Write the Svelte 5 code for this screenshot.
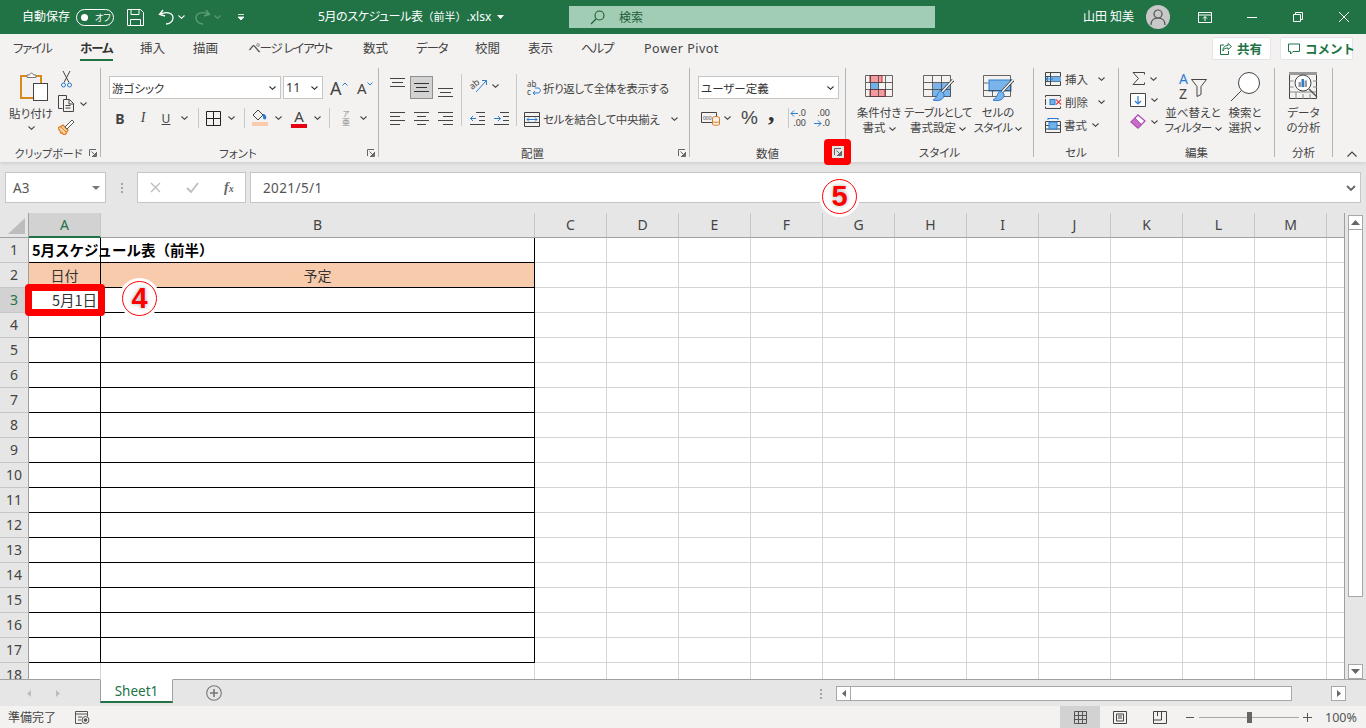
<script>
  const tabs = [
    { label: "ファイル", cls: "kana" },
    { label: "ホーム", cls: "kana" },
    { label: "挿入", cls: "" },
    { label: "描画", cls: "" },
    { label: "ページ レイアウト", cls: "kana" },
    { label: "数式", cls: "" },
    { label: "データ", cls: "kana" },
    { label: "校閲", cls: "" },
    { label: "表示", cls: "" },
    { label: "ヘルプ", cls: "kana" },
    { label: "Power Pivot", cls: "latin" }
  ];
  const columns = ["A", "B", "C", "D", "E", "F", "G", "H", "I", "J", "K", "L", "M", ""];
  const rows = Array.from({ length: 18 }, (_, i) => i + 1);

  function cellClass(row, idx) {
    const names = ["cell"];
    if (idx < 2 && row <= 17) names.push("boxed");
    if (idx < 2 && row === 2) names.push("head");
    return names.join(" ");
  }
</script>

{#snippet chev(cls = "")}
  <svg class="chev {cls}" width="7" height="4" viewBox="0 0 7 4"><path d="M.5.5 3.5 3.3 6.5.5" fill="none" stroke="currentColor" stroke-width="1.1" /></svg>
{/snippet}

{#snippet launcher()}
  <svg class="launcher" width="8" height="8" viewBox="0 0 8 8"><path d="M.5 7V.5H7M7.5 3v4.500H3M2.500 2.500l4 4M4 6.500h2.500V4" fill="none" stroke="#666" stroke-width="1" /></svg>
{/snippet}

<div class="app">
  <header class="titlebar">
    <span class="autosave">自動保存</span>
    <span class="toggle"><i></i><b>オフ</b></span>
    <svg class="qa save" width="17" height="17" viewBox="0 0 17 17"><path d="M.5.5h13l3 3v13H.5zM4 .5v5h8v-5M3.500 16.500v-6h10v6" fill="none" stroke="#fff" /></svg>
    <svg class="qa undo" width="17" height="16" viewBox="0 0 17 16"><path d="M5 1 1.500 5.500 7 7M2 5.500c5-3 13-2.500 13 3.500 0 4-4 6-7 6" fill="none" stroke="#fff" stroke-width="1.300" /></svg>
    <span class="qa-chev">{@render chev()}</span>
    <svg class="qa redo" width="17" height="16" viewBox="0 0 17 16"><path d="M12 1l3.500 4.500L10 7M15 5.500c-5-3-13-2.500-13 3.500 0 4 4 6 7 6" fill="none" stroke="#5f9c7a" stroke-width="1.300" /></svg>
    <span class="qa-chev dim">{@render chev()}</span>
    <svg class="qa custom" width="8" height="7" viewBox="0 0 8 7"><path d="M1 .5h6M1 3 4 6 7 3z" fill="#fff" stroke="#fff" stroke-width=".8" /></svg>
    <span class="doc"><span class="doc-kana">5月のスケジュール表</span><span class="doc-paren">（前半）</span>.xlsx</span>
    <svg class="doc-caret" width="7" height="4" viewBox="0 0 7 4"><path d="M0 0h7L3.500 4z" fill="#fff" /></svg>
    <div class="search">
      <svg width="15" height="15" viewBox="0 0 15 15"><circle cx="9.500" cy="5.500" r="4.500" fill="none" stroke="#1c5a38" stroke-width="1.100" /><path d="M6 9 1 14" stroke="#1c5a38" stroke-width="1.100" /></svg>
      <span>検索</span>
    </div>
    <span class="user">山田 知美</span>
    <span class="avatar">
      <svg width="16" height="16" viewBox="0 0 16 16"><circle cx="8" cy="5" r="4" fill="none" stroke="#555" stroke-width="1.200" /><path d="M1 16c0-5 3-7 7-7s7 2 7 7" fill="none" stroke="#555" stroke-width="1.200" /></svg>
    </span>
    <svg class="win" width="14" height="11" viewBox="0 0 14 11"><path d="M.5.500h13v10H.5zM.5 3h13M7 9V4.500M5 6.500 7 4.500l2 2" fill="none" stroke="#fff" /></svg>
    <svg class="win minw" width="10" height="1" viewBox="0 0 10 1"><path d="M0 .5h10" stroke="#fff" /></svg>
    <svg class="win resw" width="10" height="10" viewBox="0 0 10 10"><path d="M.5 2.500h7v7h-7zM2.500 2.500v-2h7v7h-2" fill="none" stroke="#fff" /></svg>
    <svg class="win closew" width="10" height="10" viewBox="0 0 10 10"><path d="M0 0l10 10M10 0 0 10" stroke="#fff" /></svg>
  </header>

  <nav class="tabs">
    {#each tabs as tab}
      <span class="tab-slot"><span class="tab {tab.cls}" class:active={tab.label === "ホーム"}>{tab.label}</span></span>
    {/each}
    <button class="pill share">
      <svg width="12" height="12" viewBox="0 0 12 12"><path d="M8 .5l3.500 3L8 6.500V5C5 5 3.500 6 3 8c-.5-3 1.500-5.500 5-5.500zM4 2H.5v9.500h8V8" fill="none" stroke="#217346" /></svg>
      共有
    </button>
    <button class="pill comment">
      <svg width="12" height="12" viewBox="0 0 12 12"><path d="M.5 1h11v7.500H5L2.500 11V8.500h-2z" fill="none" stroke="#217346" /></svg>
      コメント
    </button>
  </nav>

  <section class="ribbon">
    <div class="group clip">
      <div class="body">
        <div class="paste">
          <svg class="paste-icon" width="28" height="29" viewBox="0 0 28 29"><rect x="1" y="4" width="20" height="22" fill="#f3f2f1" stroke="#d98a1f" stroke-width="2" /><path d="M7 5V3h2.500c.5-2.500 3.500-2.500 4 0H16v2.500H7z" fill="#fff" stroke="#777" /><rect x="13.500" y="11.500" width="14" height="17" fill="#fff" stroke="#444" /></svg>
          <span class="lbl">貼り付け</span>
          {@render chev("under")}
        </div>
        <div class="clip-col">
          <svg class="cut" width="11" height="17" viewBox="0 0 11 17"><path d="M2 0l6 11.500M9 0 3 11.500" stroke="#444" /><circle cx="2.500" cy="14" r="2" fill="none" stroke="#2b7cd3" /><circle cx="8.500" cy="14" r="2" fill="none" stroke="#2b7cd3" /></svg>
          <span class="with-chev">
            <svg width="17" height="17" viewBox="0 0 17 17"><path d="M4.500 13.500H.5V.5h8V4M5.500 4.500h6l4 4v8h-10zM11 4.500V9h4.500M7.500 10.500h5M7.500 13h5" fill="none" stroke="#444" /></svg>
            {@render chev()}
          </span>
          <svg class="brush" width="16" height="16" viewBox="0 0 16 16"><path d="M0 9l5-3 5 5-3 5-2-1-1-1-1 0-1-2z" fill="#f8cfa0" stroke="#e07b1a" stroke-width="1.300" /><path d="M3 8l5 5" stroke="#e07b1a" /><path d="M7 8l7-7 2 2-7 7z" fill="#fff" stroke="#555" /></svg>
        </div>
      </div>
      <div class="caption"><span></span><span>クリップボード</span>{@render launcher()}</div>
    </div>

    <div class="group font">
      <div class="body">
        <div class="font-row top">
          <span class="select name"><span class="sel-txt">游ゴシック</span>{@render chev()}</span>
          <span class="select size"><span class="sel-txt">11</span>{@render chev()}</span>
          <span class="grow">A<svg width="6" height="4" viewBox="0 0 6 4"><path d="M.5 3.500 3 1l2.500 2.500" fill="none" stroke="#2b7cd3" /></svg></span>
          <span class="shrink">A<svg width="6" height="4" viewBox="0 0 6 4"><path d="M.5.500 3 3 5.500.5" fill="none" stroke="#2b7cd3" /></svg></span>
        </div>
        <div class="font-row bottom">
          <b class="fmt bold">B</b>
          <i class="fmt ital">I</i>
          <u class="fmt under">U</u>
          {@render chev()}
          <span class="vsep s1"></span>
          <svg width="15" height="15" viewBox="0 0 15 15"><path d="M.5.500h14v14H.5zM7.500.500v14M.5 7.500h14" fill="none" stroke="#222" /></svg>
          {@render chev()}
          <span class="vsep s2"></span>
          <span class="swatch">
            <svg width="16" height="11" viewBox="0 0 16 11"><path d="M1 5l5-5 5 5-5 5z" fill="none" stroke="#444" /><path d="M11 4c2 0 4 2 3 5-1 1-3 0-3-1z" fill="#2b7cd3" /></svg>
            <i class="bar peach"></i>
          </span>
          {@render chev()}
          <span class="swatch text-color">
            <span class="letter">A</span>
            <i class="bar red"></i>
          </span>
          {@render chev()}
          <span class="vsep s3"></span>
          <span class="phonetic"><small>ア</small><span>亜</span></span>
          {@render chev()}
        </div>
      </div>
      <div class="caption"><span></span><span>フォント</span>{@render launcher()}</div>
    </div>

    <div class="group align">
      <div class="body">
        <div class="align-left">
          <div class="align-row">
            <svg class="l-top" width="15" height="9" viewBox="0 0 15 9"><path d="M0 .5h15M2 4.500h11M0 8.500h15" stroke="#444" /></svg>
            <span class="on"><svg width="15" height="9" viewBox="0 0 15 9"><path d="M0 .5h15M2 4.500h11M0 8.500h15" stroke="#333" /></svg></span>
            <svg class="l-bot" width="15" height="9" viewBox="0 0 15 9"><path d="M0 .5h15M2 4.500h11M0 8.500h15" stroke="#444" /></svg>
          </div>
          <div class="align-row second">
            <svg width="15" height="13" viewBox="0 0 15 13"><path d="M0 .5h15M0 4.500h10M0 8.500h15M0 12.500h10" stroke="#444" /></svg>
            <svg width="15" height="13" viewBox="0 0 15 13"><path d="M0 .5h15M3 4.500h9M0 8.500h15M3 12.500h9" stroke="#444" /></svg>
            <svg width="15" height="13" viewBox="0 0 15 13"><path d="M0 .5h15M5 4.500h10M0 8.500h15M5 12.500h10" stroke="#444" /></svg>
          </div>
        </div>
        <span class="vsep tall"></span>
        <div class="align-mid">
          <span class="with-chev">
            <svg class="open" width="17" height="15" viewBox="0 0 17 15"><text x="0" y="10" class="svg-txt" transform="rotate(-40 4 8)">ab</text><path d="M6 14 16 3M12 2.500h4.500V7" fill="none" stroke="#2b7cd3" /></svg>
            {@render chev()}
          </span>
          <span class="indent">
            <svg width="15" height="13" viewBox="0 0 15 13"><path d="M6 .5h9M9 4.500h6M9 8.500h6M0 12.500h15" stroke="#444" /><path d="M0 6.500h6M3 4 .5 6.500 3 9" fill="none" stroke="#2b7cd3" /></svg>
            <svg width="15" height="13" viewBox="0 0 15 13"><path d="M6 .5h9M9 4.500h6M9 8.500h6M0 12.500h15" stroke="#444" /><path d="M0 6.500h6M4 4l2.500 2.500L4 9" fill="none" stroke="#2b7cd3" /></svg>
          </span>
        </div>
        <span class="vsep tall"></span>
        <div class="align-wrap">
          <span class="wrap-row first">
            <svg class="open" width="15" height="16" viewBox="0 0 15 16"><text x="0" y="6.500" class="svg-txt small">ab</text><text x="0" y="15" class="svg-txt small">c</text><path d="M6 13h5c3 0 3-5 0-5H8M8 11l-2 2 2 2" fill="none" stroke="#2b7cd3" /></svg>
            折り返して全体を表示する
          </span>
          <span class="wrap-row">
            <svg width="16" height="15" viewBox="0 0 16 15"><path d="M.5.500h15v14H.5zM.5 4.500h15M.5 10.500h15" fill="none" stroke="#444" /><path d="M3 7.500h10M5 5.500l-2 2 2 2M11 5.500l2 2-2 2" fill="none" stroke="#2b7cd3" /></svg>
            セルを結合して中央揃え
            {@render chev("wrap-chev")}
          </span>
        </div>
      </div>
      <div class="caption"><span></span><span>配置</span>{@render launcher()}</div>
    </div>

    <div class="group number">
      <div class="body">
        <span class="select fmt-name"><span class="sel-txt">ユーザー定義</span>{@render chev()}</span>
        <div class="number-row">
          <span class="with-chev tight">
            <svg class="open" width="20" height="16" viewBox="0 0 20 16"><path d="M.5 2.500h15v10H.5z" fill="none" stroke="#444" /><text x="2" y="9.500" class="svg-txt tiny">000</text><ellipse cx="15" cy="8" rx="3.500" ry="1.500" fill="#f3f2f1" stroke="#e07b1a" /><path d="M11.500 8v6.500c0 1 7 1 7 0V8M11.500 11.500c0 1 7 1 7 0" fill="#f3f2f1" stroke="#e07b1a" /></svg>
            {@render chev()}
          </span>
          <span class="pct">%</span>
          <span class="comma">,</span>
          <span class="vsep"></span>
          <span class="dec">
            <span class="dec-line"><svg width="8" height="7" viewBox="0 0 8 7"><path d="M8 3.500H1M4 .5l-3 3 3 3" fill="none" stroke="#2b7cd3" /></svg>.0</span>
            <span class="dec-line">.00</span>
          </span>
          <span class="dec second">
            <span class="dec-line">.00</span>
            <span class="dec-line"><svg width="8" height="7" viewBox="0 0 8 7"><path d="M0 3.500h7M4 .5l3 3-3 3" fill="none" stroke="#2b7cd3" /></svg>.0</span>
          </span>
        </div>
      </div>
      <div class="caption"><span></span><span>数値</span>{@render launcher()}</div>
    </div>

    <div class="group style">
      <div class="body big-row">
        <div class="big">
          <span class="big-icon low"><svg width="28" height="22" viewBox="0 0 28 22"><rect x="5" y=".5" width="12" height="7" fill="#f59ba0" stroke="#c8202a" /><rect x="5.500" y="7.500" width="8" height="7" fill="#6fb1e8" /><rect x="5" y="14.500" width="15" height="7" fill="#f59ba0" stroke="#c8202a" /><path d="M.5.500h27v21H.5zM.5 7.500h27M.5 14.500h27M5.500 .5v21M13.500 .5v21M20.500 .5v21" fill="none" stroke="#444" stroke-opacity=".8" /></svg></span>
          <span class="lbl">条件付き<br />書式 {@render chev()}</span>
        </div>
        <div class="big">
          <span class="big-icon low"><svg width="31" height="27" viewBox="0 0 31 27"><rect x="10" y="8" width="18" height="14" fill="#7ab4ea" /><path d="M.5.500h27v21H.5zM.5 7.500h27M.5 14.500h27M9.500 .5v21M18.500 .5v21" fill="none" stroke="#444" stroke-opacity=".8" /><path d="M30 5 18 18" stroke="#444" stroke-width="3" /><path d="M30 5 18 18" stroke="#fff" stroke-width="1.400" /><path d="M18 16c-4 0-3 7-8 9 6 2 12-1 11-6z" fill="#7ab4ea" stroke="#2b7cd3" /></svg></span>
          <span class="lbl"><span class="narrow">テーブルとして</span><br />書式設定 {@render chev()}</span>
        </div>
        <div class="big">
          <span class="big-icon low"><svg width="31" height="27" viewBox="0 0 31 27"><rect x="6" y="5" width="22" height="11" fill="#7ab4ea" stroke="#2b7cd3" /><path d="M.5.500h27v21H.5zM.5 8h5M.5 15.500h27M9.500 15.500v6M18.500 15.500v6" fill="none" stroke="#444" stroke-opacity=".8" /><path d="M30 5 18 18" stroke="#444" stroke-width="3" /><path d="M30 5 18 18" stroke="#fff" stroke-width="1.400" /><path d="M18 16c-4 0-3 7-8 9 6 2 12-1 11-6z" fill="#7ab4ea" stroke="#2b7cd3" /></svg></span>
          <span class="lbl">セルの<br /><span class="narrow">スタイル</span> {@render chev()}</span>
        </div>
      </div>
      <div class="caption single"><span>スタイル</span></div>
    </div>

    <div class="group cells">
      <div class="body">
        <span class="cell-cmd">
          <svg width="17" height="14" viewBox="0 0 17 14"><path d="M.5.500h15v13H.5zM.5 4.500h15M.5 9.500h15M5.500.5v13" fill="none" stroke="#444" /><rect x="6" y="4.500" width="10" height="5" fill="#6fb1e8" /><path d="M1 7h7M3.500 4.500 1 7l2.500 2.500" fill="none" stroke="#2b7cd3" stroke-width="1.200" /></svg>
          <span class="cmd-txt">挿入</span>{@render chev()}
        </span>
        <span class="cell-cmd">
          <svg width="17" height="14" viewBox="0 0 17 14"><path d="M.5 2.500v-2h15v2M.5 11.500v2h15v-2M.5 4v6M5.500 4v6" fill="none" stroke="#444" /><rect x="5" y="4.500" width="5" height="5" fill="#6fb1e8" stroke="#2b7cd3" /><path d="M11 4.500l5 5M16 4.500l-5 5" stroke="#e8484f" stroke-width="1.300" /></svg>
          <span class="cmd-txt">削除</span>{@render chev()}
        </span>
        <span class="cell-cmd fmt-cmd">
          <svg width="16" height="15" viewBox="0 0 16 15"><path d="M.5 3.500h15v11H.5zM.5 7.500h15M.5 11h15" fill="none" stroke="#444" /><rect x="4" y="4" width="8" height="7" fill="#6fb1e8" stroke="#2b7cd3" /><path d="M3 .5h10M3 0v2M13 0v2" fill="none" stroke="#2b7cd3" /></svg>
          <span class="cmd-txt">書式</span>{@render chev()}
        </span>
      </div>
      <div class="caption single"><span>セル</span></div>
    </div>

    <div class="group edit">
      <div class="body edit-body">
        <div class="edit-col">
          <span class="with-chev sigma">
            <svg width="13" height="13" viewBox="0 0 13 13"><path d="M12.500 2.500V.5H1L6.500 6.500 1 12.500h11.500v-2" fill="none" stroke="#444" /></svg>
            {@render chev()}
          </span>
          <span class="with-chev">
            <svg width="16" height="14" viewBox="0 0 16 14"><path d="M.5.500h15v13H.5z" fill="#fff" stroke="#444" /><path d="M8 3v8M5 8l3 3 3-3" fill="none" stroke="#2b7cd3" stroke-width="1.200" /></svg>
            {@render chev()}
          </span>
          <span class="with-chev">
            <svg width="16" height="15" viewBox="0 0 16 15"><path d="M1 8l7-7 7 6-7 7z" fill="#fff" stroke="#b14fb5" stroke-width="1.300" /><path d="M1 8l4-4 6 6-3 4z" fill="#c66fca" stroke="#b14fb5" /></svg>
            {@render chev()}
          </span>
        </div>
        <div class="big sort">
          <span class="big-icon"><svg class="open" width="31" height="28" viewBox="0 0 31 28"><text x="1" y="11.500" class="svg-az blue">A</text><text x="1" y="27" class="svg-az">Z</text><path d="M13.500 7.500h15L23 14.500v8l-4 2v-10z" fill="none" stroke="#444" /></svg></span>
          <span class="lbl">並べ替えと<br /><span class="narrow">フィルター</span> {@render chev()}</span>
        </div>
        <div class="big find">
          <span class="big-icon"><svg width="30" height="29" viewBox="0 0 30 29"><circle cx="19" cy="11" r="10.500" fill="#fff" stroke="#444" /><path d="M11.500 18.500 1 29" stroke="#444" /></svg></span>
          <span class="lbl">検索と<br />選択 {@render chev()}</span>
        </div>
      </div>
      <div class="caption single"><span>編集</span></div>
    </div>

    <div class="group analysis">
      <div class="body">
        <div class="big">
          <span class="big-icon"><svg width="29" height="29" viewBox="0 0 29 29"><path d="M.5.500h27v26H.5z" fill="none" stroke="#444" /><rect x="0" y="0" width="28" height="3" fill="#999" /><path d="M.5 20h27M7 20v7M14 22v5M21 22v5M.5 9h4M.5 15h4M24 9h4M24 15h4" stroke="#888" /><circle cx="14" cy="11" r="8" fill="#fff" stroke="#444" /><rect x="9.500" y="10" width="2.500" height="5" fill="#999" /><rect x="12.500" y="7" width="2.500" height="8" fill="#2b7cd3" /><rect x="15.500" y="8.500" width="2.500" height="6.500" fill="#999" /><path d="M20 17l8 8" stroke="#555" stroke-width="1.500" /></svg></span>
          <span class="lbl">データ<br />の分析</span>
        </div>
      </div>
      <div class="caption single"><span>分析</span></div>
    </div>

    <svg class="collapse" width="10" height="6" viewBox="0 0 10 6"><path d="M.5 5.500 5 1l4.500 4.500" fill="none" stroke="#444" stroke-width="1.200" /></svg>
  </section>

  <div class="formula">
    <span class="namebox"><span>A3</span><svg width="8" height="4" viewBox="0 0 8 4"><path d="M0 0h8L4 4z" fill="#777" /></svg></span>
    <span class="grip"><i></i><i></i><i></i></span>
    <span class="fx-box">
      <svg width="11" height="11" viewBox="0 0 11 11"><path d="M1 1l9 9M10 1 1 10" stroke="#bdbdbd" stroke-width="1.400" /></svg>
      <svg width="13" height="11" viewBox="0 0 13 11"><path d="M1 6l4 4 7-9" fill="none" stroke="#bdbdbd" stroke-width="1.800" /></svg>
      <em>f<small>x</small></em>
    </span>
    <span class="input"><span>2021/5/1</span><svg width="10" height="6" viewBox="0 0 10 6"><path d="M1 1l4 4 4-4" fill="none" stroke="#666" stroke-width="1.800" /></svg></span>
  </div>

  <div class="workspace">
    <div class="sheet">
      <div class="corner"><i></i></div>
      {#each columns as col}
        <div class="col-head" class:selected={col === "A"}>{col}</div>
      {/each}
      {#each rows as row}
        <div class="row-head" class:selected={row === 3}>{row}</div>
        {#each columns as col, idx}
          <div class={cellClass(row, idx)}>
            {#if row === 1 && idx === 0}<span class="sheet-title">5月スケジュール表（前半）</span>{/if}
            {#if row === 2 && idx === 0}日付{/if}
            {#if row === 2 && idx === 1}予定{/if}
            {#if row === 3 && idx === 0}<span class="date">5月1日</span>{/if}
          </div>
        {/each}
      {/each}
    </div>
    <aside class="vscroll">
      <span class="sbtn"><svg width="9" height="5" viewBox="0 0 9 5"><path d="M4.500 0 9 5H0z" fill="#666" /></svg></span>
      <span class="thumb"></span>
      <span class="sbtn end"><svg width="9" height="5" viewBox="0 0 9 5"><path d="M4.500 5 9 0H0z" fill="#666" /></svg></span>
    </aside>
  </div>

  <div class="sheetbar">
    <svg class="nav-arrow" width="4" height="7" viewBox="0 0 4 7"><path d="M4 0v7L0 3.500z" fill="#bdbdbd" /></svg>
    <svg class="nav-arrow next" width="4" height="7" viewBox="0 0 4 7"><path d="M0 0v7l4-3.500z" fill="#bdbdbd" /></svg>
    <span class="sheet-tab">Sheet1</span>
    <svg class="add" width="16" height="16" viewBox="0 0 16 16"><circle cx="8" cy="8" r="7.300" fill="none" stroke="#777" stroke-width="1.100" /><path d="M8 4v8M4 8h8" stroke="#777" stroke-width="1.600" /></svg>
    <span class="tab-grip"><i></i><i></i><i></i></span>
    <div class="hscroll">
      <span class="hbtn"><svg width="4" height="7" viewBox="0 0 4 7"><path d="M4 0v7L0 3.500z" fill="#666" /></svg></span>
      <span class="hthumb"></span>
      <span class="hbtn right"><svg width="4" height="7" viewBox="0 0 4 7"><path d="M0 0v7l4-3.500z" fill="#666" /></svg></span>
    </div>
  </div>

  <footer class="status">
    <span class="ready">準備完了</span>
    <svg class="macro" width="15" height="13" viewBox="0 0 15 13"><path d="M7 12.500H.5V.5h12v5M.5 3h12M3 6h4M3 9h3" fill="none" stroke="#555" /><circle cx="10.500" cy="9" r="3.500" fill="none" stroke="#555" /><circle cx="10.500" cy="9" r="1.800" fill="#555" /></svg>
    <span class="status-gap"></span>
    <span class="view active"><svg width="13" height="13" viewBox="0 0 13 13"><path d="M.5.500h12v12H.5zM4.500.5v12M8.500.5v12M.5 4.500h12M.5 8.500h12" fill="none" stroke="#555" /></svg></span>
    <span class="view"><svg width="14" height="13" viewBox="0 0 14 13"><path d="M.5.500h13v12H.5zM3.500 3h7v7h-7zM5 5h4M5 7h4" fill="none" stroke="#444" /></svg></span>
    <span class="view"><svg width="14" height="13" viewBox="0 0 14 13"><path d="M.5.500h13v12H.5zM.5 9h8V.5M4.500.5V5" fill="none" stroke="#444" /></svg></span>
    <span class="zoom-minus"></span>
    <span class="slider"><i></i></span>
    <span class="zoom-plus"></span>
    <span class="percent">100%</span>
  </footer>

  <div class="hl-cell"></div>
  <div class="hl-launcher">{@render launcher()}</div>
  <div class="step step4"><span>4</span></div>
  <div class="step step5"><span>5</span></div>
</div>

<style>
  :global(body) {
    margin: 0;
    background: #fff;
  }

  .app {
    position: relative;
    width: 1366px;
    height: 728px;
    overflow: hidden;
    display: flex;
    flex-direction: column;
    font-family: "Noto Sans", "Noto Sans CJK JP", sans-serif;
    font-size: 12px;
    color: #444;
    font-feature-settings: "palt";
  }

  svg {
    display: block;
    flex: none;
  }

  svg.open {
    overflow: visible;
  }

  /* title bar */
  .titlebar {
    height: 34px;
    flex: none;
    background: #217346;
    color: #fff;
    display: flex;
    align-items: center;
    padding-left: 22px;
    box-sizing: border-box;
  }

  .autosave {
    width: 54px;
    margin-top: -2px;
  }

  .toggle {
    width: 38px;
    height: 17px;
    box-sizing: border-box;
    border: 1px solid #fff;
    border-radius: 9px;
    display: flex;
    align-items: center;
    padding-left: 4px;
  }

  .toggle i {
    width: 7px;
    height: 7px;
    border-radius: 50%;
    background: #fff;
    margin-right: 7px;
  }

  .toggle b {
    font-size: 9px;
    font-weight: 400;
  }

  .save {
    margin-left: 13px;
  }

  .undo {
    margin-left: 14px;
  }

  .qa-chev {
    margin-left: 3px;
    color: #fff;
  }

  .qa-chev.dim {
    color: #5f9c7a;
  }

  .redo {
    margin-left: 9px;
  }

  .custom {
    margin-left: 16px;
  }

  .doc {
    margin-left: 73px;
    width: 176px;
    white-space: nowrap;
    margin-top: -2px;
  }

  .doc-kana {
    letter-spacing: -.4px;
  }

  .doc-paren {
    font-feature-settings: normal;
    font-size: 11px;
  }

  .doc-caret {
    margin-left: 3px;
  }

  .search {
    margin-left: 65px;
    width: 366px;
    height: 22px;
    background: #a0cdb3;
    color: #1f5c3a;
    display: flex;
    align-items: center;
    padding-left: 21px;
    gap: 14px;
    box-sizing: border-box;
  }

  .user {
    margin-left: 148px;
    width: 63px;
    white-space: nowrap;
    margin-top: -2px;
  }

  .avatar {
    width: 24px;
    height: 24px;
    border-radius: 50%;
    background: #c8c8c8;
    display: grid;
    place-items: center;
  }

  .win {
    margin-left: 28px;
  }

  .minw {
    margin-left: 35px;
  }

  .resw {
    margin-left: 36px;
  }

  .closew {
    margin-left: 36px;
  }

  /* tabs */
  .tabs {
    height: 34px;
    flex: none;
    background: #f3f2f1;
    display: grid;
    grid-template-columns: 67px 60px 53px 55px 115px 53px 59px 53px 53px 63px 1fr 68px 73px;
    padding: 0 13px 0 13px;
    box-sizing: border-box;
    white-space: nowrap;
  }

  .tab {
    display: inline-block;
    height: 25px;
    line-height: 30px;
    font-size: 12.500px;
  }

  .tab.kana {
    letter-spacing: -1.200px;
  }

  .tab.latin {
    letter-spacing: .5px;
  }

  .tab.active {
    font-weight: 700;
    border-bottom: 2px solid #217346;
    color: #333;
    letter-spacing: -1px;
  }

  .pill {
    margin-top: 3px;
    height: 23px;
    width: 59px;
    box-sizing: border-box;
    border: 1px solid #e4e4e4;
    border-radius: 2px;
    background: #fff;
    color: #217346;
    font: 700 12.500px "Noto Sans CJK JP", sans-serif;
    display: flex;
    align-items: center;
    gap: 5px;
    padding: 0 0 0 7px;
  }

  .pill.comment {
    width: 73px;
  }

  /* ribbon */
  .ribbon {
    height: 94px;
    flex: none;
    background: #f3f2f1;
    display: flex;
    position: relative;
    box-shadow: 0 2px 3px #d2d2d2;
    z-index: 1;
  }

  .group {
    height: 89px;
    box-sizing: border-box;
    border-right: 1px solid #b5b5b5;
    display: flex;
    flex-direction: column;
  }

  .body {
    height: 77px;
    flex: none;
    box-sizing: border-box;
  }

  .caption {
    display: grid;
    grid-template-columns: 1fr auto 1fr;
    align-items: center;
    height: 16px;
    font-size: 11.500px;
    padding-right: 3px;
    white-space: nowrap;
  }

  .caption.single {
    display: block;
    text-align: center;
    padding: 0;
    line-height: 16px;
  }

  .caption .launcher {
    justify-self: end;
  }

  .lbl {
    text-align: center;
    line-height: 15px;
    font-size: 11.500px;
    white-space: nowrap;
  }

  .lbl :global(.chev) {
    display: inline-block;
    vertical-align: middle;
  }

  .narrow {
    letter-spacing: -.6px;
  }

  .with-chev {
    display: flex;
    align-items: center;
    gap: 5px;
  }

  .with-chev.tight {
    gap: 3px;
  }

  .select {
    box-sizing: border-box;
    height: 23px;
    background: #fff;
    border: 1px solid #c6c6c6;
    display: flex;
    align-items: center;
    justify-content: space-between;
    padding: 0 4px 0 2px;
    font-size: 11.500px;
    color: #333;
  }

  .vsep {
    width: 1px;
    height: 20px;
    background: #c8c8c8;
    flex: none;
  }

  .vsep.tall {
    height: 52px;
    margin-top: 6px;
  }

  /* clipboard */
  .clip {
    width: 101px;
  }

  .clip .body {
    display: flex;
    padding-left: 8px;
  }

  .paste {
    width: 46px;
    display: flex;
    flex-direction: column;
    align-items: center;
    padding-top: 4px;
  }

  .paste-icon {
    margin-left: 5px;
  }

  .paste .lbl {
    margin-top: 5px;
  }

  .paste :global(.under) {
    margin-top: 5px;
  }

  .clip-col {
    display: flex;
    flex-direction: column;
    gap: 7px;
    padding: 3px 0 0 4px;
  }

  .cut {
    margin-left: 3px;
  }

  .clip .caption {
    font-size: 11px;
  }

  /* font */
  .font {
    width: 278px;
  }

  .font-row {
    display: flex;
    align-items: center;
  }

  .font-row.top {
    padding: 8px 0 0 8px;
    gap: 2px;
  }

  .select.name {
    width: 172px;
  }

  .select.size {
    width: 40px;
    font-size: 12.500px;
  }

  .grow,
  .shrink {
    font-size: 18px;
    color: #444;
    margin-left: 5px;
    width: 18px;
    line-height: 22px;
    display: flex;
    align-items: flex-start;
  }

  .grow svg,
  .shrink svg {
    margin-top: 5px;
  }

  .shrink {
    font-size: 15px;
    margin-left: 7px;
  }

  .font-row.bottom {
    padding: 9px 0 0 11px;
    height: 20px;
    gap: 7px;
  }

  .fmt {
    width: 16px;
    text-align: center;
    font-size: 14px;
    font-family: "Noto Sans", sans-serif;
  }

  .ital {
    font-family: "Liberation Serif", serif;
  }

  .under {
    font-size: 12px;
  }

  .vsep.s1 {
    margin-left: 3px;
  }

  .vsep.s2 {
    margin-left: 2px;
  }

  .vsep.s3 {
    margin-left: 1px;
  }

  .swatch {
    width: 16px;
    display: flex;
    flex-direction: column;
    align-items: center;
    gap: 1px;
  }

  .bar {
    display: block;
    width: 16px;
    height: 4px;
  }

  .peach {
    background: #f8cbad;
  }

  .red {
    background: #e60012;
  }

  .text-color {
    margin-left: 2px;
  }

  .letter {
    font-size: 15px;
    line-height: 14px;
  }

  .phonetic {
    width: 14px;
    margin-left: 2px;
    display: flex;
    flex-direction: column;
    align-items: center;
    font-size: 8px;
    line-height: 8px;
    color: #888;
  }

  .phonetic small {
    font-size: 7px;
  }

  /* alignment */
  .align {
    width: 311px;
  }

  .align .body {
    display: flex;
  }

  .align-left {
    width: 82px;
    padding: 8px 0 0 11px;
    box-sizing: border-box;
  }

  .align-row {
    display: flex;
    align-items: flex-end;
    height: 23px;
  }

  .align-row .l-top {
    align-self: flex-start;
    margin-top: 2px;
  }

  .align-row .on {
    width: 23px;
    height: 23px;
    box-sizing: border-box;
    background: #d2d2d2;
    border: 1px solid #8f8f8f;
    display: grid;
    place-items: center;
    margin-left: 5px;
  }

  .align-row .l-bot {
    margin-left: 5px;
    margin-bottom: 2px;
  }

  .align-row.second {
    margin-top: 13px;
    height: 13px;
    gap: 9px;
  }

  .align-mid {
    width: 54px;
    box-sizing: border-box;
    padding: 10px 0 0 8px;
  }

  .indent {
    display: flex;
    gap: 9px;
    margin-top: 19px;
  }

  .align-wrap {
    padding-top: 12px;
    display: flex;
    flex-direction: column;
    gap: 15px;
    font-size: 11.500px;
    letter-spacing: -.35px;
    white-space: nowrap;
  }

  .wrap-row {
    display: flex;
    align-items: center;
    gap: 3px;
    margin-left: 7px;
    height: 16px;
  }

  .wrap-row.first {
    margin-left: 10px;
    gap: 1px;
  }

  .wrap-row :global(.wrap-chev) {
    margin-left: 9px;
  }

  .svg-txt {
    font: 9px "Noto Sans", sans-serif;
    fill: #444;
    letter-spacing: 0;
  }

  .svg-txt.small {
    font-size: 8px;
  }

  .svg-txt.tiny {
    font-size: 5px;
  }

  /* number */
  .number {
    width: 156px;
  }

  .number .body {
    padding: 8px 0 0 8px;
  }

  .select.fmt-name {
    width: 141px;
  }

  .number-row {
    display: flex;
    align-items: center;
    height: 20px;
    margin-top: 9px;
    padding-left: 3px;
  }

  .pct {
    font-size: 19px;
    margin-left: 10px;
    line-height: 20px;
    width: 15px;
    font-family: "Liberation Sans", sans-serif;
    white-space: nowrap;
  }

  .comma {
    font: 700 26px/10px "Liberation Serif", serif;
    color: #333;
    margin-left: 12px;
    width: 7px;
    height: 20px;
  }

  .number-row .vsep {
    margin-left: 13px;
    margin-right: 2px;
  }

  .dec {
    display: flex;
    flex-direction: column;
    align-items: flex-end;
    width: 15px;
    font-size: 9px;
    line-height: 10px;
    height: 20px;
  }

  .dec.second {
    margin-left: 9px;
  }

  .dec-line {
    display: flex;
    align-items: center;
    height: 10px;
  }

  .number .caption {
    padding-right: 0;
  }

  /* style */
  .style {
    width: 188px;
  }

  .big-row {
    display: grid;
    grid-template-columns: 58px 60px 60px;
    padding-left: 4px;
  }

  .big {
    display: flex;
    flex-direction: column;
    align-items: center;
    padding-top: 4px;
    box-sizing: border-box;
  }

  .big-icon {
    height: 33px;
    flex: none;
  }

  .big-icon.low {
    padding-top: 3px;
    height: 30px;
  }

  /* cells */
  .cells {
    width: 85px;
  }

  .cells .body {
    padding: 3px 0 0 11px;
    display: flex;
    flex-direction: column;
    gap: 7px;
  }

  .cell-cmd {
    display: flex;
    align-items: center;
    height: 16px;
    font-size: 11.500px;
  }

  .cmd-txt {
    margin: 0 8px 0 3px;
    width: 25px;
  }

  .fmt-cmd .cmd-txt {
    margin-right: 3px;
  }

  /* editing */
  .edit {
    width: 156px;
  }

  .edit-body {
    display: flex;
    padding-left: 11px;
  }

  .edit-col {
    display: flex;
    flex-direction: column;
    gap: 7px;
    padding-top: 3px;
    width: 32px;
  }

  .sigma {
    margin-left: 2px;
    height: 15px;
  }

  .sort {
    width: 62px;
  }

  .find {
    width: 42px;
  }

  .svg-az {
    font: 14px "Noto Sans", sans-serif;
    fill: #444;
  }

  .svg-az.blue {
    fill: #2b7cd3;
  }

  /* analysis */
  .analysis {
    width: 58px;
  }

  .analysis .big {
    width: 57px;
  }

  .collapse {
    position: absolute;
    right: 9px;
    top: 83px;
  }

  /* formula bar */
  .formula {
    height: 51px;
    flex: none;
    background: #e6e6e6;
    box-sizing: border-box;
    padding: 10px 5px 0;
    display: flex;
    align-items: flex-start;
    font-size: 13.500px;
    font-feature-settings: normal;
  }

  .namebox,
  .fx-box,
  .input {
    height: 31px;
    box-sizing: border-box;
    border: 1px solid #c6c6c6;
    background: #fff;
    display: flex;
    align-items: center;
    color: #555;
  }

  .namebox {
    width: 101px;
    justify-content: space-between;
    padding: 0 5px 0 7px;
  }

  .grip {
    width: 31px;
    height: 31px;
    display: flex;
    flex-direction: column;
    align-items: center;
    justify-content: center;
    gap: 2px;
  }

  .grip i,
  .tab-grip i {
    width: 2px;
    height: 2px;
    background: #a5a5a5;
  }

  .fx-box {
    width: 109px;
    padding-left: 12px;
    gap: 25px;
  }

  .fx-box em {
    font: italic 700 14px "Liberation Serif", serif;
    color: #666;
  }

  .fx-box small {
    font-size: 10px;
  }

  .input {
    margin-left: 4px;
    flex: 1;
    justify-content: space-between;
    padding: 0 4px 0 12px;
    letter-spacing: .4px;
  }

  /* worksheet */
  .workspace {
    height: 466px;
    flex: none;
    display: flex;
    background: #e6e6e6;
  }

  .sheet {
    width: 1345px;
    overflow: hidden;
    display: grid;
    grid-template-columns: 29px 72px 434px repeat(11, 72px) 18px;
    grid-template-rows: 25px repeat(18, 25px);
    background: #fff;
    border-right: 1px solid #9f9f9f;
    box-sizing: border-box;
    font-family: "Noto Sans CJK JP", sans-serif;
    font-feature-settings: normal;
  }

  .corner {
    background: #e6e6e6;
    border-right: 1px solid #9f9f9f;
    border-bottom: 1px solid #9f9f9f;
  }

  .corner i {
    display: block;
    width: 0;
    height: 0;
    margin: 5px 0 0 8px;
    border-style: solid;
    border-width: 0 0 16px 17px;
    border-color: transparent transparent #bdbdbd transparent;
  }

  .col-head {
    background: #e6e6e6;
    border-right: 1px solid #c6c6c6;
    border-bottom: 1px solid #9f9f9f;
    text-align: center;
    line-height: 24px;
    font-size: 14px;
    color: #444;
    font-family: "Noto Sans", sans-serif;
  }

  .col-head.selected {
    background: #d2d2d2;
    color: #217346;
    border-bottom: 2px solid #217346;
    line-height: 23px;
  }

  .row-head {
    background: #e6e6e6;
    border-right: 1px solid #9f9f9f;
    border-bottom: 1px solid #c6c6c6;
    text-align: center;
    line-height: 24px;
    font-size: 14px;
    color: #444;
    font-family: "Noto Sans", sans-serif;
  }

  .row-head.selected {
    background: #d2d2d2;
    color: #217346;
  }

  .cell {
    border-right: 1px solid #d4d4d4;
    border-bottom: 1px solid #d4d4d4;
    min-width: 0;
    font-size: 14px;
    line-height: 24px;
    color: #333;
  }

  .cell.boxed {
    border-right-color: #000;
    border-bottom-color: #000;
    text-align: center;
  }

  .cell.head {
    background: #f8cbad;
  }

  .sheet-title {
    display: block;
    width: 240px;
    padding-left: 3px;
    font-weight: 700;
    text-align: left;
    color: #000;
    font-size: 14.500px;
    white-space: nowrap;
  }

  .date {
    display: block;
    text-align: right;
    padding-right: 3px;
    font-size: 14.500px;
  }

  .vscroll {
    width: 21px;
    box-sizing: border-box;
    padding: 2px 3px 0;
    display: flex;
    flex-direction: column;
  }

  .sbtn {
    width: 15px;
    height: 15px;
    flex: none;
    box-sizing: border-box;
    background: #fff;
    border: 1px solid #a8a8a8;
    display: grid;
    place-items: center;
  }

  .sbtn.end {
    margin-top: 67px;
  }

  .thumb {
    height: 367px;
    flex: none;
    background: #fff;
    border: 1px solid #a8a8a8;
    border-top: 0;
    box-sizing: border-box;
  }

  /* sheet tabs */
  .sheetbar {
    height: 27px;
    flex: none;
    box-sizing: border-box;
    background: #e6e6e6;
    border-top: 1px solid #a0a0a0;
    display: flex;
    align-items: flex-start;
  }

  .nav-arrow {
    margin: 10px 0 0 27px;
  }

  .nav-arrow.next {
    margin-left: 25px;
  }

  .sheet-tab {
    margin: -1px 0 0 40px;
    width: 73px;
    height: 24px;
    box-sizing: border-box;
    background: #fff;
    border: 1px solid #a0a0a0;
    border-top-color: #fff;
    border-bottom: 2px solid #217346;
    text-align: center;
    line-height: 23px;
    color: #217346;
    font-size: 13.500px;
  }

  .add {
    margin: 5px 0 0 33px;
  }

  .tab-grip {
    margin: 9px 0 0 598px;
    display: flex;
    flex-direction: column;
    gap: 2px;
  }

  .hscroll {
    display: flex;
    margin: 6px 0 0 14px;
    height: 15px;
    width: 510px;
  }

  .hbtn {
    width: 15px;
    height: 15px;
    flex: none;
    box-sizing: border-box;
    background: #fff;
    border: 1px solid #a8a8a8;
    display: grid;
    place-items: center;
  }

  .hbtn.right {
    margin-left: 39px;
  }

  .hthumb {
    width: 441px;
    flex: none;
    background: #fff;
    border: 1px solid #a8a8a8;
    border-left: 0;
    box-sizing: border-box;
  }

  /* status bar */
  .status {
    height: 22px;
    flex: none;
    background: #f3f2f1;
    display: flex;
    align-items: center;
    padding-left: 8px;
    font-size: 12px;
  }

  .ready {
    width: 67px;
  }

  .status-gap {
    width: 970px;
  }

  .view {
    width: 40px;
    height: 22px;
    display: grid;
    place-items: center;
  }

  .view.active {
    background: #d2d2d2;
  }

  .zoom-minus,
  .zoom-plus {
    width: 8px;
    height: 1px;
    background: #555;
    margin-left: 6px;
    position: relative;
  }

  .zoom-plus {
    width: 9px;
    margin-left: 4px;
  }

  .zoom-plus::after {
    content: "";
    position: absolute;
    left: 4px;
    top: -4px;
    width: 1px;
    height: 9px;
    background: #555;
  }

  .slider {
    width: 100px;
    height: 1px;
    margin-left: 5px;
    background: #a8a8a8;
    position: relative;
  }

  .slider i {
    position: absolute;
    left: 48px;
    top: -5px;
    width: 5px;
    height: 11px;
    background: #666;
  }

  .percent {
    margin-left: 13px;
    font-size: 12.500px;
    color: #555;
  }

  /* annotations laid over the screenshot */
  .hl-cell {
    position: absolute;
    left: 25px;
    top: 284px;
    width: 80px;
    height: 32px;
    box-sizing: border-box;
    border: 7px solid #f00;
    border-radius: 4px;
    z-index: 3;
  }

  .hl-launcher {
    position: absolute;
    left: 824px;
    top: 139px;
    width: 27px;
    height: 26px;
    background: #f00;
    border-radius: 4px;
    display: grid;
    place-items: center;
    z-index: 3;
  }

  .hl-launcher :global(.launcher) {
    background: #e6e6e6;
    outline: 2px solid #e6e6e6;
  }

  .step {
    position: absolute;
    width: 35px;
    height: 35px;
    box-sizing: border-box;
    border: 1px solid #f00;
    border-radius: 50%;
    background: #fff;
    box-shadow: 0 0 0 3px #fff;
    color: #f00;
    font: 700 29px/33px "Liberation Sans", sans-serif;
    text-align: center;
    text-shadow: 0 0 4px #aaa;
    z-index: 3;
  }

  .step4 {
    left: 122px;
    top: 281px;
  }

  .step5 {
    left: 822px;
    top: 179px;
  }
</style>
